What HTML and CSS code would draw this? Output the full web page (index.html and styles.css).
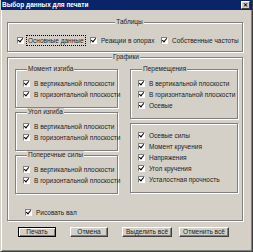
FILE: index.html
```html
<!DOCTYPE html>
<html lang="ru">
<head>
  <meta charset="UTF-8">
  <title>Выбор данных для печати</title>
  <link rel="stylesheet" href="styles.css">
</head>
<body>
<div class="window">
  <div class="titlebar">
    <span class="title">Выбор данных для печати</span>
    <span class="close">✕</span>
  </div>

  <div class="content">
    <div class="group tables">
      <div class="group-title center">Таблицы</div>
      <div class="tables-row">
        <label class="check"><span class="box"></span><span class="text focus">Основные данные</span></label>
        <label class="check"><span class="box"></span><span class="text">Реакции в опорах</span></label>
        <label class="check"><span class="box"></span><span class="text">Собственные частоты</span></label>
      </div>
    </div>

    <div class="group graphs">
      <div class="group-title center">Графики</div>
      <div class="cols">
        <div class="col">
          <div class="group sub">
            <div class="group-title">Момент изгиба</div>
            <div class="checks">
              <label class="check"><span class="box"></span><span class="text">В вертикальной плоскости</span></label>
              <label class="check"><span class="box"></span><span class="text">В горизонтальной плоскости</span></label>
            </div>
          </div>
          <div class="group sub">
            <div class="group-title">Угол изгиба</div>
            <div class="checks">
              <label class="check"><span class="box"></span><span class="text">В вертикальной плоскости</span></label>
              <label class="check"><span class="box"></span><span class="text">В горизонтальной плоскости</span></label>
            </div>
          </div>
          <div class="group sub">
            <div class="group-title">Поперечные силы</div>
            <div class="checks">
              <label class="check"><span class="box"></span><span class="text">В вертикальной плоскости</span></label>
              <label class="check"><span class="box"></span><span class="text">В горизонтальной плоскости</span></label>
            </div>
          </div>
          <label class="check draw"><span class="box"></span><span class="text">Рисовать вал</span></label>
        </div>

        <div class="col">
          <div class="group sub">
            <div class="group-title">Перемещения</div>
            <div class="checks">
              <label class="check"><span class="box"></span><span class="text">В вертикальной плоскости</span></label>
              <label class="check"><span class="box"></span><span class="text">В горизонтальной плоскости</span></label>
              <label class="check"><span class="box"></span><span class="text">Осевые</span></label>
            </div>
          </div>
          <div class="group sub plain">
            <div class="checks">
              <label class="check"><span class="box"></span><span class="text">Осевые силы</span></label>
              <label class="check"><span class="box"></span><span class="text">Момент кручения</span></label>
              <label class="check"><span class="box"></span><span class="text">Напряжения</span></label>
              <label class="check"><span class="box"></span><span class="text">Угол кручения</span></label>
              <label class="check"><span class="box"></span><span class="text">Усталостная прочность</span></label>
            </div>
          </div>
        </div>
      </div>
    </div>

    <div class="buttons">
      <button class="btn default">Печать</button>
      <button class="btn">Отмена</button>
      <button class="btn wide">Выделить всё</button>
      <button class="btn wide">Отменить всё</button>
    </div>
  </div>
</div>
</body>
</html>
```

FILE: styles.css
```css
* {
  margin: 0;
  padding: 0;
  box-sizing: border-box;
}

body {
  font-family: 'Liberation Sans', Arial, sans-serif;
  font-size: 6.5px;
  color: #222;
  background: #d4d0c8;
}

.window {
  width: 253px;
  height: 252px;
  background: #d4d0c8;
  border: 1px solid;
  border-color: #d4d0c8 #404040 #404040 #d4d0c8;
  border-top: none;
  box-shadow: inset 1px 0 0 #fff, inset -1px -1px 0 #808080;
}

.titlebar {
  height: 10px;
  background: #0a246a;
  display: flex;
  align-items: center;
  justify-content: space-between;
  padding: 0 2px 0 1px;
}

.title {
  color: #fff;
  font-weight: bold;
  font-size: 6.5px;
  line-height: 10px;
}

.close {
  width: 9px;
  height: 8px;
  background: #d4d0c8;
  border: 1px solid;
  border-color: #fff #404040 #404040 #fff;
  font-size: 6px;
  font-weight: bold;
  line-height: 6px;
  text-align: center;
  color: #000;
}

.content {
  padding: 12px 9px 0 6px;
}

/* etched group boxes */
.group {
  border: 1px solid #808080;
  box-shadow: inset 1px 1px 0 #fff, 1px 1px 0 #fff;
}

.group-title {
  display: table;
  margin: -5px 0 0 4px;
  padding: 0 1px;
  line-height: 8px;
  background: #d4d0c8;
  white-space: nowrap;
}

.group-title.center {
  margin-left: auto;
  margin-right: auto;
}

.tables {
  padding: 0 0 6px 9px;
}

.tables-row {
  display: grid;
  grid-template-columns: 73px 71px auto;
  margin-top: 9px;
}

.tables-row .check {
  height: 10px;
}

.graphs {
  margin-top: 5px;
  padding: 0 5px 2px 7px;
}

.cols {
  display: grid;
  grid-template-columns: 103px 108px;
  column-gap: 12px;
  margin-top: 8px;
}

.col {
  display: flex;
  flex-direction: column;
}

.sub {
  padding: 0 0 7px 7px;
}

.sub + .sub {
  margin-top: 4px;
}

.sub .checks {
  margin-top: 5px;
}

.sub.plain .checks {
  margin-top: 6px;
}

/* checkboxes */
.check {
  display: flex;
  align-items: center;
  height: 11px;
  white-space: nowrap;
}

.box {
  position: relative;
  flex: none;
  width: 7px;
  height: 7px;
  margin-right: 2px;
  background: #fff;
  border: 1px solid;
  border-color: #808080 #fff #fff #808080;
}

.box:after {
  content: "";
  position: absolute;
  left: 1px;
  top: -1px;
  width: 2px;
  height: 4px;
  border: solid #000;
  border-width: 0 1px 1px 0;
  transform: rotate(40deg);
}

.text {
  line-height: 9px;
  padding: 0 1px;
  border: 1px solid transparent;
}

.text.focus {
  border: 1px dotted #000;
}

.draw {
  margin: 13px 0 0 10px;
}

/* buttons */
.buttons {
  display: flex;
  margin-top: 6px;
  padding-left: 11px;
}

.btn {
  height: 10px;
  width: 38px;
  margin-right: 14px;
  background: #d4d0c8;
  font-family: inherit;
  font-size: 6.5px;
  line-height: 8px;
  color: #222;
  border: 1px solid;
  border-color: #fff #404040 #404040 #fff;
  box-shadow: inset -1px -1px 0 #808080;
}

.btn.default {
  border-color: #000;
  box-shadow: inset 1px 1px 0 #fff, inset -1px -1px 0 #808080;
}

.btn.wide {
  width: 50px;
  margin-right: 7px;
}
```
